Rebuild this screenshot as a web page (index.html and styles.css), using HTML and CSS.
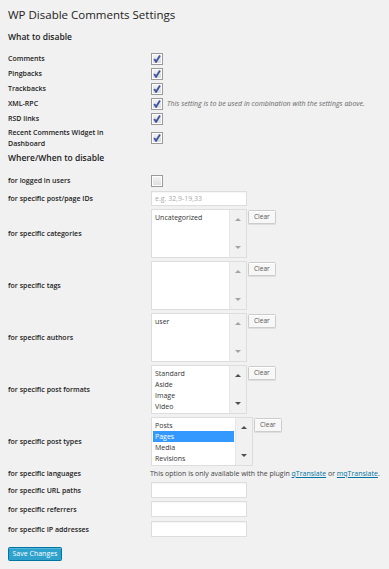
FILE: index.html
```html
<html>
<head>
<meta charset="utf-8">
<title>WP Disable Comments Settings</title>
<link rel="stylesheet" href="styles.css">
</head>
<body>
<div class="wrap">
<h2>WP Disable Comments Settings</h2>

<form>
<h3 class="first">What to disable</h3>
<div class="form-table top">
	<div class="row"><div class="th">Comments</div><div class="td"><span class="cb checked"></span></div></div>
	<div class="row"><div class="th">Pingbacks</div><div class="td"><span class="cb checked"></span></div></div>
	<div class="row"><div class="th">Trackbacks</div><div class="td"><span class="cb checked"></span></div></div>
	<div class="row"><div class="th">XML-RPC</div><div class="td"><span class="cb checked"></span><span class="description">This setting is to be used in combination with the settings above.</span></div></div>
	<div class="row"><div class="th">RSD links</div><div class="td"><span class="cb checked"></span></div></div>
	<div class="row tall"><div class="th">Recent Comments Widget in Dashboard</div><div class="td"><span class="cb checked"></span></div></div>
</div>

<h3 class="second">Where/When to disable</h3>
<div class="form-table bottom">
	<div class="row"><div class="th">for logged in users</div><div class="td"><span class="cb"></span></div></div>
	<div class="row row-input first-input"><div class="th">for specific post/page IDs</div><div class="td"><span class="text-input placeholder">e.g. 32,9-19,33</span></div></div>

	<div class="row row-select first-select"><div class="th">for specific categories</div><div class="td">
		<div class="select">
			<div class="options"><div class="option">Uncategorized</div></div>
			<div class="scrollbar"><span class="arrow up"></span><span class="arrow down"></span></div>
		</div>
		<span class="button">Clear</span>
	</div></div>

	<div class="row row-select"><div class="th">for specific tags</div><div class="td">
		<div class="select">
			<div class="options"></div>
			<div class="scrollbar"><span class="arrow up"></span><span class="arrow down"></span></div>
		</div>
		<span class="button">Clear</span>
	</div></div>

	<div class="row row-select"><div class="th">for specific authors</div><div class="td">
		<div class="select">
			<div class="options"><div class="option">user</div></div>
			<div class="scrollbar"><span class="arrow up"></span><span class="arrow down"></span></div>
		</div>
		<span class="button">Clear</span>
	</div></div>

	<div class="row row-select"><div class="th">for specific post formats</div><div class="td">
		<div class="select">
			<div class="options">
				<div class="option">Standard</div>
				<div class="option">Aside</div>
				<div class="option">Image</div>
				<div class="option">Video</div>
			</div>
			<div class="scrollbar active"><span class="arrow up"></span><span class="arrow down"></span></div>
		</div>
		<span class="button">Clear</span>
	</div></div>

	<div class="row row-select"><div class="th">for specific post types</div><div class="td">
		<div class="select wide">
			<div class="options">
				<div class="option">Posts</div>
				<div class="option selected">Pages</div>
				<div class="option">Media</div>
				<div class="option">Revisions</div>
			</div>
			<div class="scrollbar active"><span class="arrow up"></span><span class="arrow down"></span></div>
		</div>
		<span class="button">Clear</span>
	</div></div>

	<div class="row row-note"><div class="th">for specific languages</div><div class="td"><span class="note">This option is only available with the plugin <a href="#">qTranslate</a> or <a href="#">mqTranslate</a>.</span></div></div>
	<div class="row row-input"><div class="th">for specific URL paths</div><div class="td"><span class="text-input"></span></div></div>
	<div class="row row-input tight"><div class="th">for specific referrers</div><div class="td"><span class="text-input"></span></div></div>
	<div class="row row-input"><div class="th">for specific IP addresses</div><div class="td"><span class="text-input"></span></div></div>
</div>

<p class="submit"><span class="button-primary">Save Changes</span></p>
</form>
</div>
</body>
</html>
```

FILE: styles.css
```css
body {
	margin: 0;
	background-color: #f1f1f1;
	color: #444;
	font-family: "Open Sans", "DejaVu Sans", sans-serif;
	font-size: 7px;
}

.wrap {
	padding: 0 8px;
}

h2 {
	margin: 7px 0 0;
	font-size: 11.5px;
	line-height: 15px;
	font-weight: 400;
	color: #222;
}

h3 {
	margin: 0;
	font-size: 8.5px;
	line-height: 12px;
	font-weight: 600;
	color: #222;
}

h3.first {
	margin-top: 9px;
}

h3.second {
	margin-top: 3px;
}

.form-table.top {
	margin-top: 8px;
}

.form-table.bottom {
	margin-top: 9px;
}

.row {
	display: grid;
	grid-template-columns: 143px 1fr;
	align-items: center;
	min-height: 15px;
}

.row.tall {
	min-height: 23px;
}

.th {
	max-width: 110px;
	font-weight: 600;
	line-height: 11px;
	color: #222;
}

.td {
	display: flex;
	align-items: center;
}

.cb {
	box-sizing: border-box;
	width: 12px;
	height: 12px;
	border: 1px solid #9a9a9a;
	box-shadow: inset 0 0 0 1px #fff;
	background: linear-gradient(#f4f4f4, #dcdcdc);
}

.cb.checked {
	background: url("data:image/svg+xml;utf8,<svg xmlns='http://www.w3.org/2000/svg' viewBox='0 0 10 10'><path d='M2.2 5 L4.1 7.8 L8 1.6' fill='none' stroke='%233f55a0' stroke-width='1.9'/></svg>") center / 10px 10px no-repeat, linear-gradient(#f4f4f4, #d8d8d8);
}

.description {
	margin-left: 4px;
	font-style: italic;
	font-size: 7px;
	color: #666;
}

.row-input {
	min-height: 18px;
	margin-top: 2px;
}

.row-input.first-input {
	min-height: 17px;
}

.row-input.tight {
	margin-top: 1px;
}

.text-input {
	box-sizing: border-box;
	display: block;
	width: 96px;
	height: 16px;
	padding: 0 3px;
	background-color: #fff;
	border: 1px solid #ddd;
	box-shadow: inset 0 1px 1px rgba(0, 0, 0, 0.04);
	line-height: 14px;
	font-size: 7px;
}

.placeholder {
	height: 15px;
	line-height: 13px;
	color: #aaa;
}

.row-select {
	margin-top: 3px;
}

.row-select.first-select {
	margin-top: 2px;
}

.row-select .td {
	align-items: flex-start;
}

.select {
	box-sizing: border-box;
	display: flex;
	width: 96px;
	height: 49px;
	background-color: #fff;
	border: 1px solid #ddd;
	padding: 1px;
}

.select.wide {
	width: 102px;
}

.options {
	flex: 1;
	padding-top: 1px;
}

.option {
	height: 11px;
	line-height: 11px;
	padding: 0 2px;
	color: #333;
}

.option.selected {
	background-color: #3399ff;
	color: #fff;
}

.scrollbar {
	box-sizing: border-box;
	display: flex;
	flex-direction: column;
	justify-content: space-between;
	align-items: center;
	width: 17px;
	margin: -1px -1px -1px 1px;
	padding: 8px 0;
	background-color: #f1f1f1;
	border-left: 1px solid #e6e6e6;
}

.arrow {
	width: 0;
	height: 0;
	border-left: 3px solid transparent;
	border-right: 3px solid transparent;
}

.arrow.up {
	border-bottom: 3px solid #a3a3a3;
}

.arrow.down {
	border-top: 3px solid #a3a3a3;
}

.scrollbar.active .arrow.up {
	border-bottom-color: #505050;
}

.scrollbar.active .arrow.down {
	border-top-color: #505050;
}

.button {
	box-sizing: border-box;
	margin-left: 1px;
	margin-top: 1px;
	height: 14px;
	padding: 0 5px;
	line-height: 12px;
	color: #555;
	background-color: #f7f7f7;
	border: 1px solid #ccc;
	border-radius: 1.5px;
	box-shadow: inset 0 1px 0 #fff, 0 1px 0 rgba(0, 0, 0, 0.08);
	font-size: 6.5px;
}

.row-note {
	min-height: 12px;
	margin-top: 1px;
}

.note {
	margin-left: -1px;
	font-size: 7px;
	color: #444;
}

.note a {
	color: #0074a2;
}

.submit {
	margin: 9px 0 0;
}

.button-primary {
	box-sizing: border-box;
	display: inline-block;
	width: 54px;
	height: 14px;
	line-height: 12px;
	text-align: center;
	color: #fff;
	background-color: #2ea2cc;
	border: 1px solid #0074a2;
	border-radius: 1.5px;
	box-shadow: inset 0 1px 0 rgba(120, 200, 230, 0.5);
	font-size: 7px;
}
```
